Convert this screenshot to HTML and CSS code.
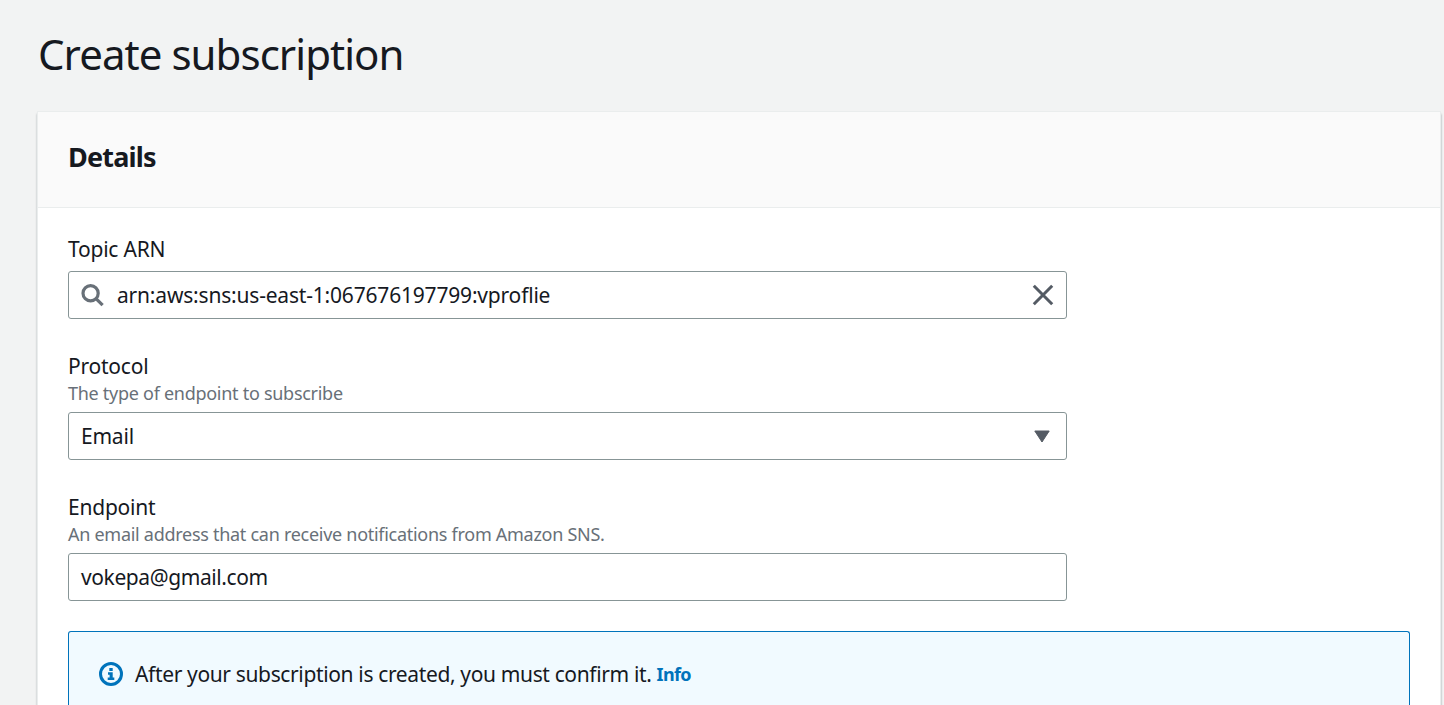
FILE: index.html
```html
<!DOCTYPE html>
<html lang="en">
<head>
<meta charset="utf-8">
<title>Create subscription</title>
<link rel="stylesheet" href="styles.css">
</head>
<body>
<main class="page">
  <h1 class="title"><span>Create subscription</span></h1>
  <section class="card">
    <header class="card-header"><h2 class="card-title">Details</h2></header>
    <div class="card-body">
      <div class="field">
        <div class="label"><span class="topic-label">Topic ARN</span></div>
        <div class="control control-search">
          <svg class="search-icon" width="24" height="24" viewBox="0 0 24 24" fill="none" stroke="#687078" stroke-width="3.2"><circle cx="9.6" cy="10.2" r="7.6"/><path d="M15 15.6 21.6 22.2"/></svg>
          <span class="value arn">arn:aws:sns:us-east-1:067676197799:vproflie</span>
          <svg class="clear-icon" width="24" height="24" viewBox="0 0 24 24" fill="none" stroke="#545b64" stroke-width="3"><path d="M2.8 2.8 21.2 21.2M21.2 2.8 2.8 21.2"/></svg>
        </div>
      </div>
      <div class="field">
        <div class="label"><span class="protocol-label">Protocol</span></div>
        <div class="hint"><span class="protocol-hint">The type of endpoint to subscribe</span></div>
        <div class="control">
          <span class="value email">Email</span>
          <svg class="caret-icon" width="16" height="13" viewBox="0 0 16 13" fill="#545b64" stroke="#545b64" stroke-width="1" stroke-linejoin="round"><path d="M.8 1H15.2L8 12Z"/></svg>
        </div>
      </div>
      <div class="field">
        <div class="label"><span class="endpoint-label">Endpoint</span></div>
        <div class="hint"><span class="endpoint-hint">An email address that can receive notifications from Amazon SNS.</span></div>
        <div class="control"><span class="value address">vokepa@gmail.com</span></div>
      </div>
      <div class="notice">
        <svg width="24" height="24" viewBox="0 0 24 24"><circle cx="12" cy="12" r="10.5" fill="none" stroke="#0073bb" stroke-width="3"/><path d="M10.3 6h3.4v3h-3.4zM9 10.3h4.7v5.2h1.6V18H8.7v-2.5h1.9v-2.7H9z" fill="#0073bb"/></svg>
        <span class="notice-text">After your subscription is created, you must confirm it.</span>
        <a class="info">Info</a>
      </div>
    </div>
  </section>
</main>
</body>
</html>
```
FILE: styles.css
```css
* { box-sizing: border-box; }
body {
  margin: 0;
  height: 705px;
  overflow: hidden;
  background: #f2f3f3;
  color: #16191f;
  font-family: "Noto Sans", "Open Sans", sans-serif;
  font-size: 21px;
  letter-spacing: -.22px;
}
.page { padding: 24px 4px 0 38px; }
.title {
  margin: 0 0 28px;
  height: 60px;
  line-height: 60px;
  font-size: 42px;
  font-weight: 400;
  letter-spacing: -.95px;
}
.card {
  height: 593px;
  background: #fff;
  box-shadow: 0 0 0 1px #eaeded, 1px 2px 2px 0 rgba(0, 28, 36, .4), -1px 2px 2px 0 rgba(0, 28, 36, .3);
}
.card-header {
  height: 96px;
  padding: 25px 30px 0;
  background: #fafafa;
  border-bottom: 1px solid #eaeded;
}
.card-title { margin: 0; font-size: 27px; line-height: 40px; font-weight: 700; letter-spacing: -.8px; }
.card-body { padding: 25px 30px 0; }
.field { margin-bottom: 30px; width: 999px; }
.label { height: 33px; line-height: 33px; margin-bottom: 5px; }
.label:has(+ .hint) { line-height: 34px; margin-bottom: -3px; }
.hint { height: 33px; line-height: 29px; color: #687078; font-size: 18px; letter-spacing: -.28px; }
.control {
  display: flex;
  align-items: center;
  height: 48px;
  padding: 0 12px;
  border: 1px solid #879596;
  border-radius: 3px;
  background: #fff;
}
.value { flex: 1; white-space: nowrap; line-height: 30px; }
.arn { letter-spacing: -.19px; }
.address { letter-spacing: -.4px; }
.search-icon { margin-right: 12px; }
.caret-icon { margin-right: 4px; }
.clear-icon { margin-right: -1px; }
.notice {
  display: flex;
  align-items: center;
  height: 74px;
  padding: 10px 30px 0;
  border: 1px solid #0073bb;
  border-bottom: 0;
  border-radius: 3px 3px 0 0;
  background: #f1faff;
}
.notice-text { margin-left: 12px; white-space: nowrap; letter-spacing: -.36px; }
.info { margin-left: 5px; color: #0073bb; font-size: 18px; font-weight: 700; letter-spacing: -.6px; }
```
